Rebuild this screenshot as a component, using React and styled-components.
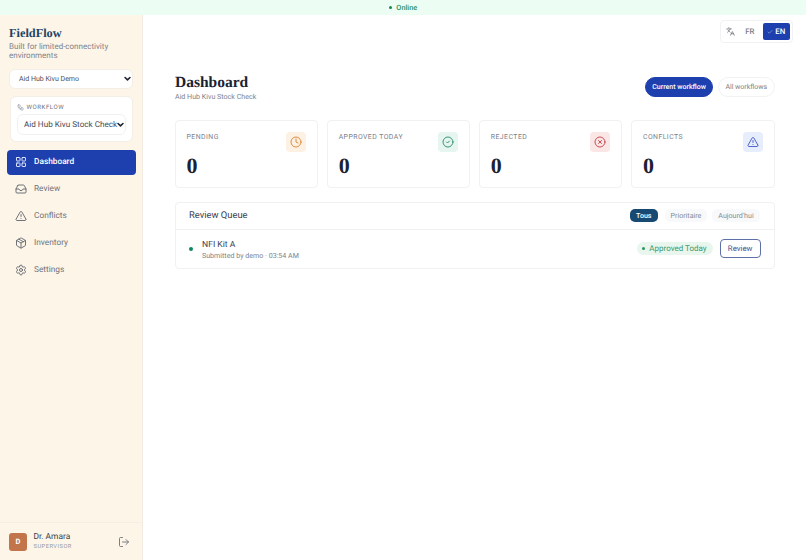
import React from "react";
import styled, { createGlobalStyle } from "styled-components";
import { Check, Languages, Workflow, LayoutGrid, Inbox, TriangleAlert, Package, Settings, LogOut, Clock, CircleCheck, CircleX } from "lucide-react";

const Global = createGlobalStyle`
  html, body { margin: 0; padding: 0; height: 100%; background: #fff; }
  #root { height: 100%; }
  * { box-sizing: border-box; }
  body { font-family: Roboto, "Liberation Sans", sans-serif; color: #1f2937; text-rendering: geometricPrecision; }
`;
const serif = `"Liberation Serif", serif`;

const Page = styled.div`width: 806px; height: 560px; display: flex; flex-direction: column; overflow: hidden;`;
const StatusBar = styled.div`
  height: 15px; flex: none; background: #ecfdf3; display: flex; align-items: center; justify-content: center;
  gap: 4.5px; font-size: 7.3px; font-weight: 500; color: #2f8f5b;
`;
const StatusDot = styled.span`width: 3px; height: 3px; border-radius: 50%; background: #128a50;`;
const Body = styled.div`flex: 1; display: flex; min-height: 0;`;
const Sidebar = styled.aside`
  width: 143px; flex: none; background: #fdf5e8; border-right: 1px solid #f1ebe2;
  display: flex; flex-direction: column;
`;
const Brand = styled.div`padding: 11px 9px 0;`;
const Logo = styled.div`font-family: ${serif}; font-weight: 700; font-size: 12.3px; line-height: 14px; color: #1e4464;`;
const Tagline = styled.div`font-size: 8px; line-height: 9px; color: #80848c; margin-top: 2px; width: 110px;`;
const OrgSelectBox = styled.div`
  margin: 9px 9.5px 0 9px; height: 19.5px; background: #fff; border: 1px solid #f3eee6; border-radius: 6px;
  display: flex; align-items: center; justify-content: space-between; padding: 0 1px 0 9px;
  font-size: 7px; font-weight: 400; color: #4b4f5c;
`;
const Chevron = styled.svg`width: 7px; height: 7px; flex: none; fill: none; stroke: #1f2430; stroke-width: 2.2; stroke-linecap: round; stroke-linejoin: round;`;
const WorkflowCard = styled.div`
  margin: 7px 9.5px 0; height: 46.5px; background: #fff; border: 1px solid #f3eee6; border-radius: 6px; padding: 7px 6px 0;
`;
const WorkflowLabel = styled.div`
  display: flex; align-items: center; gap: 3px; padding-left: 0; font-size: 6.1px; letter-spacing: .55px; font-weight: 400; color: #6b7078; line-height: 8px;
  svg { width: 7px; height: 7px; color: #8a8f96; }
`;
const WorkflowSelect = styled.div`
  margin-top: 2px; height: 21.5px; border: 1px solid #f0f1f3; border-radius: 6px; display: flex; align-items: center;
  justify-content: space-between; padding: 0 2px 0 6.5px; font-size: 8.15px; font-weight: 400; color: #454a56; white-space: nowrap;
`;
const Nav = styled.nav`margin-top: 7.5px; padding: 0 6.5px 0 7px; display: flex; flex-direction: column; gap: 2px;`;
const NavItem = styled.div`
  height: 25px; border-radius: 4px; display: flex; align-items: center; gap: 7.5px; padding: 0 7.5px;
  font-size: 8.3px; font-weight: ${p => p.$active ? 500 : 400};
  color: ${p => p.$active ? "#fff" : "#6f737b"};
  background: ${p => p.$active ? "#1e40af" : "transparent"};
  svg { width: 12px; height: 12px; stroke-width: ${p => p.$active ? 2 : 1.8}; color: ${p => p.$active ? "#dbe4ff" : "#5f646c"}; flex: none; }
`;
const UserFooter = styled.div`
  margin-top: auto; height: 38px; border-top: 1px solid #f4eee4; display: flex; align-items: center; padding: 0 9px; gap: 6.5px;
`;
const Avatar = styled.div`
  width: 18px; height: 18px; border-radius: 3px; background: #c2754a; color: #fff; font-size: 7.5px; font-weight: 700;
  display: flex; align-items: center; justify-content: center;
`;
const UserInfo = styled.div`flex: 1;`;
const UserName = styled.div`font-size: 8.4px; font-weight: 400; line-height: 11px; color: #3a3f4b;`;
const UserRole = styled.div`font-size: 5.7px; letter-spacing: .5px; line-height: 8px; color: #94989f; font-weight: 400;`;
const LogoutIcon = styled(LogOut)`width: 12px; height: 12px; color: #6b7078; margin-right: 3.5px; stroke-width: 1.8;`;

const Main = styled.main`flex: 1; min-width: 0; display: flex; flex-direction: column; padding: 5.3px 13.4px 0 32px;`;
const TopRow = styled.div`display: flex; justify-content: flex-end;`;
const LangSwitch = styled.div`
  height: 23px; width: 72.6px; border: 1px solid #f1f2f4; border-radius: 4px; display: flex; align-items: center; padding: 2px 1.6px 2px 5px;
  svg.lang { width: 9px; height: 9px; color: #6b7078; margin-right: 5px; flex: none; }
`;
const LangOption = styled.div`
  height: 100%; display: flex; align-items: center; justify-content: center; gap: 2px; font-size: 7.8px; font-weight: 500; border-radius: 2px;
  width: ${p => p.$active ? "28px" : "20px"}; margin-right: ${p => p.$active ? "0" : "3px"};
  color: ${p => p.$active ? "#fff" : "#7b8087"}; background: ${p => p.$active ? "#1e40af" : "transparent"};
  svg { width: 6px; height: 6px; color: #b9c7ee; }
`;
const Content = styled.div`margin-right: 18px;`;
const Header = styled.div`display: flex; justify-content: space-between; align-items: center; margin-top: 26.7px; height: 37px;`;
const Title = styled.h1`margin: 0; font-family: ${serif}; font-size: 15.5px; line-height: 18px; font-weight: 700; color: #1a2233;`;
const Subtitle = styled.div`font-size: 7.1px; line-height: 10px; color: #7d828a;`;
const ScopeTabs = styled.div`display: flex; gap: 4.5px; align-items: center; margin-bottom: 3px;`;
const ScopeTab = styled.div`
  height: 19.5px; padding: 0 6.5px; border-radius: 10px; display: flex; align-items: center; font-size: 7px; font-weight: ${p => p.$active ? 500 : 400};
  color: ${p => p.$active ? "#fff" : "#7d828a"}; background: ${p => p.$active ? "#1e40af" : "#fff"};
  border: 1px solid ${p => p.$active ? "#1e40af" : "#f1f2f4"};
`;
const Stats = styled.div`display: grid; grid-template-columns: repeat(4, 1fr); gap: 9px; margin-top: 13px;`;
const StatCard = styled.div`
  height: 68px; border: 1px solid #f0f1f3; border-radius: 4px; padding: 11px 11px 0 10.5px; display: flex; justify-content: space-between; background: #fff;
`;
const StatLabel = styled.div`font-size: 6.9px; line-height: 9px; margin-top: 1px; letter-spacing: .45px; color: #7d828a; font-weight: 400;`;
const StatValue = styled.div`font-family: ${serif}; font-weight: 700; font-size: 22px; line-height: 22px; color: #1a2233; margin-top: 13px;`;
const StatIcon = styled.div`
  width: 20px; height: 20px; border-radius: 4px; display: flex; align-items: center; justify-content: center;
  background: ${p => p.$bg}; color: ${p => p.$fg};
  svg { width: 12px; height: 12px; stroke-width: 1.8; }
`;
const Queue = styled.section`margin-top: 14px; border: 1px solid #f0f1f3; border-radius: 4px; background: #fff;`;
const QueueHead = styled.div`height: 27px; border-bottom: 1px solid #f0f1f3; display: flex; align-items: center; justify-content: space-between; padding: 0 14px 0 13px;`;
const QueueTitle = styled.div`font-size: 9.4px; font-weight: 400; color: #374151;`;
const Filters = styled.div`display: flex; gap: 5px;`;
const Filter = styled.div`
  height: 13px; padding: 0 6px; border-radius: 5px; display: flex; align-items: center; font-size: 7.1px; font-weight: ${p => p.$active ? 500 : 400};
  color: ${p => p.$active ? "#fff" : "#858a91"}; background: ${p => p.$active ? "#174a72" : "#f8f9fa"};
  margin-right: ${p => p.$active ? "2px" : "0"};
`;
const QueueRow = styled.div`height: 38px; display: flex; align-items: center; padding: 0 13px; gap: 9px;`;
const RowDot = styled.span`width: 4px; height: 4px; border-radius: 50%; background: #10875f; flex: none;`;
const RowText = styled.div`flex: 1; padding-top: 1.5px;`;
const RowTitle = styled.div`font-size: 8.6px; line-height: 11px; font-weight: 400; color: #374151;`;
const RowMeta = styled.div`font-size: 7.1px; line-height: 9px; color: #7d828a;`;
const Pill = styled.div`
  height: 13px; padding: 0 6px 0 5px; border-radius: 7px; background: #e8f6ee; color: #3f9a68; font-size: 8px; font-weight: 400; display: flex; align-items: center; gap: 4px; margin-right: -2px;
`;
const PillDot = styled.span`width: 3px; height: 3px; border-radius: 50%; background: #2a9460;`;
const ReviewButton = styled.div`
  width: 41px; height: 19px; border: 1px solid #5f6fa8; border-radius: 4px; display: flex; align-items: center; justify-content: center; font-size: 7.8px; font-weight: 400; color: #3f4f8f;
`;

const Arrow = () => <Chevron viewBox="0 0 10 10"><path d="M1.5 3.5 5 7l3.5-3.5" /></Chevron>;

const stats = [
  { label: "PENDING", icon: Clock, bg: "#fdf1e4", fg: "#d9822b" },
  { label: "APPROVED TODAY", icon: CircleCheck, bg: "#e6f5ef", fg: "#1f8a67" },
  { label: "REJECTED", icon: CircleX, bg: "#fbe6e6", fg: "#c63d44" },
  { label: "CONFLICTS", icon: TriangleAlert, bg: "#e6edfc", fg: "#3f55c4" },
];
const navItems = [
  { label: "Dashboard", icon: LayoutGrid, active: true },
  { label: "Review", icon: Inbox },
  { label: "Conflicts", icon: TriangleAlert },
  { label: "Inventory", icon: Package },
  { label: "Settings", icon: Settings },
];

export default function App() {
  return (
    <Page>
      <Global />
      <StatusBar><StatusDot />Online</StatusBar>
      <Body>
        <Sidebar>
          <Brand>
            <Logo>FieldFlow</Logo>
            <Tagline>Built for limited-connectivity environments</Tagline>
          </Brand>
          <OrgSelectBox>Aid Hub Kivu Demo<Arrow /></OrgSelectBox>
          <WorkflowCard>
            <WorkflowLabel><Workflow />WORKFLOW</WorkflowLabel>
            <WorkflowSelect>Aid Hub Kivu Stock Check<Arrow /></WorkflowSelect>
          </WorkflowCard>
          <Nav>
            {navItems.map(({ label, icon: Icon, active }) => (
              <NavItem key={label} $active={active}><Icon />{label}</NavItem>
            ))}
          </Nav>
          <UserFooter>
            <Avatar>D</Avatar>
            <UserInfo>
              <UserName>Dr. Amara</UserName>
              <UserRole>SUPERVISOR</UserRole>
            </UserInfo>
            <LogoutIcon />
          </UserFooter>
        </Sidebar>
        <Main>
          <TopRow>
            <LangSwitch>
              <Languages className="lang" />
              <LangOption>FR</LangOption>
              <LangOption $active><Check />EN</LangOption>
            </LangSwitch>
          </TopRow>
          <Content>
            <Header>
              <div>
                <Title>Dashboard</Title>
                <Subtitle>Aid Hub Kivu Stock Check</Subtitle>
              </div>
              <ScopeTabs>
                <ScopeTab $active>Current workflow</ScopeTab>
                <ScopeTab>All workflows</ScopeTab>
              </ScopeTabs>
            </Header>
            <Stats>
              {stats.map(({ label, icon: Icon, bg, fg }) => (
                <StatCard key={label}>
                  <div>
                    <StatLabel>{label}</StatLabel>
                    <StatValue>0</StatValue>
                  </div>
                  <StatIcon $bg={bg} $fg={fg}><Icon /></StatIcon>
                </StatCard>
              ))}
            </Stats>
            <Queue>
              <QueueHead>
                <QueueTitle>Review Queue</QueueTitle>
                <Filters>
                  <Filter $active>Tous</Filter>
                  <Filter>Prioritaire</Filter>
                  <Filter>Aujourd'hui</Filter>
                </Filters>
              </QueueHead>
              <QueueRow>
                <RowDot />
                <RowText>
                  <RowTitle>NFI Kit A</RowTitle>
                  <RowMeta>Submitted by demo · 03:54 AM</RowMeta>
                </RowText>
                <Pill><PillDot />Approved Today</Pill>
                <ReviewButton>Review</ReviewButton>
              </QueueRow>
            </Queue>
          </Content>
        </Main>
      </Body>
    </Page>
  );
}
